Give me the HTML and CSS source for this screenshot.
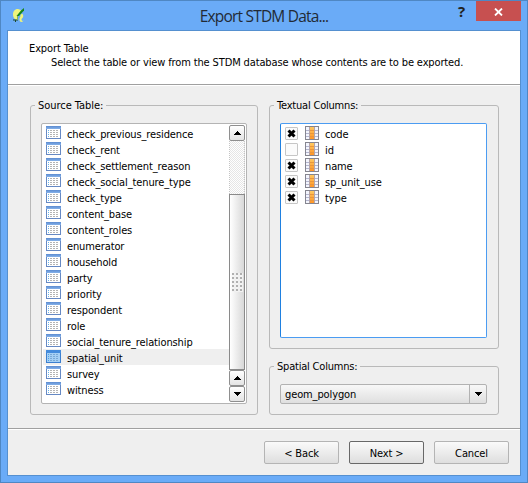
FILE: index.html
```
<!DOCTYPE html>
<html lang="en">
<head>
<meta charset="utf-8">
<title>Export STDM Data...</title>
<link rel="stylesheet" href="styles.css">
</head>
<body>
<svg class="defs" width="0" height="0">
  <defs>
    <linearGradient id="hd" x1="0" y1="0" x2="0" y2="1"><stop offset="0" stop-color="#5b8bd0"/><stop offset="1" stop-color="#86b2ea"/></linearGradient>
    <linearGradient id="or" x1="0" y1="0" x2="0" y2="1"><stop offset="0" stop-color="#ffc860"/><stop offset="1" stop-color="#ff9526"/></linearGradient>
    <symbol id="table" viewBox="0 0 15 13">
      <rect x=".5" y=".5" width="14" height="12" fill="#fff" stroke="#6689c4"/>
      <rect x="0" y="0" width="15" height="3" fill="url(#hd)"/>
      <path d="M2 4.5h2M2 6.5h2M2 8.5h2M2 10.5h2" stroke="#67b2e8" stroke-dasharray="1 1"/>
      <path d="M4 4.5h9M4 6.5h9M4 8.5h9M4 10.5h9" stroke="#b4b4b4" stroke-dasharray="2 1"/>
    </symbol>
    <symbol id="tablesel" viewBox="0 0 15 13">
      <rect x=".5" y=".5" width="14" height="12" fill="#a5d0f5" stroke="#3b7fd0"/>
      <rect x="0" y="0" width="15" height="3" fill="#438bdc"/>
      <path d="M2 4.5h2M2 6.5h2M2 8.5h2M2 10.5h2" stroke="#4aa1e8" stroke-dasharray="1 1"/>
      <path d="M4 4.5h9M4 6.5h9M4 8.5h9M4 10.5h9" stroke="#78a9d6" stroke-dasharray="2 1"/>
    </symbol>
    <symbol id="column" viewBox="0 0 14 14">
      <rect x=".5" y=".5" width="13" height="13" fill="#f3f5fd" stroke="#85858f"/>
      <path d="M1 4.5h12M1 7.5h12M1 10.5h12" stroke="#b3b5cf"/>
      <rect x="5" y="1" width="4" height="12" fill="url(#or)"/>
      <path d="M4.500 1v12M9.500 1v12" stroke="#b5a5a8"/>
      <path d="M5 4.500h4M5 7.500h4M5 10.500h4" stroke="#e9963c"/>
    </symbol>
    <symbol id="cross" viewBox="0 0 9 9"><path d="M1.500 1.500L7.500 7.500M7.500 1.500L1.500 7.500" stroke="#000" stroke-width="3"/></symbol>
    <symbol id="up" viewBox="0 0 7 4"><path d="M3 0h1v1h1v1h1v1h1v1H0V3h1V2h1V1h1z"/></symbol>
    <symbol id="down" viewBox="0 0 7 4"><path d="M0 0h7v1H6v1H5v1H4v1H3V3H2V2H1V1H0z"/></symbol>
  </defs>
</svg>
<div class="window">
  <header class="titlebar">
    <svg class="app" width="13" height="15" viewBox="0 0 13 15">
      <path d="M6 1C2.500 1 1 3.500 1 6.500c0 3 1.500 5 4 5.500V9l4-3V2z" fill="#eff57c"/>
      <path d="M10 5.500c2 1.500 1.500 4-.5 5.500 0 2 1 2.500 2 1.500-.5 2-4 2-4-.5C7 9.500 9 9 8.500 7z" fill="#eff57c"/>
      <path d="M4.500 8L9 2.500 12 0v2.500L7 8z" fill="#16851b"/>
      <path d="M1 11.500h5v1H4V14H3v-1.500H1z" fill="#1d4a2c"/>
      <path d="M5.500 8v4" stroke="#8fb54a"/>
    </svg>
    <h1>Export STDM Data...</h1>
    <span class="help">?</span>
    <span class="close"><svg width="9" height="8" viewBox="0 0 9 8"><path d="M1 .5l7 7M8 .5l-7 7" stroke="#fff" stroke-width="1.800"/></svg></span>
  </header>
  <main class="client">
    <section class="intro">
      <h2>Export Table</h2>
      <p>Select the table or view from the STDM database whose contents are to be exported.</p>
    </section>
    <section class="page">
      <fieldset class="source">
        <legend>Source Table:</legend>
        <div class="list">
          <ul>
            <li><svg><use href="#table"/></svg><span>check_previous_residence</span></li>
            <li><svg><use href="#table"/></svg><span>check_rent</span></li>
            <li><svg><use href="#table"/></svg><span>check_settlement_reason</span></li>
            <li><svg><use href="#table"/></svg><span>check_social_tenure_type</span></li>
            <li><svg><use href="#table"/></svg><span>check_type</span></li>
            <li><svg><use href="#table"/></svg><span>content_base</span></li>
            <li><svg><use href="#table"/></svg><span>content_roles</span></li>
            <li><svg><use href="#table"/></svg><span>enumerator</span></li>
            <li><svg><use href="#table"/></svg><span>household</span></li>
            <li><svg><use href="#table"/></svg><span>party</span></li>
            <li><svg><use href="#table"/></svg><span>priority</span></li>
            <li><svg><use href="#table"/></svg><span>respondent</span></li>
            <li><svg><use href="#table"/></svg><span>role</span></li>
            <li><svg><use href="#table"/></svg><span>social_tenure_relationship</span></li>
            <li class="selected"><svg><use href="#tablesel"/></svg><span>spatial_unit</span></li>
            <li><svg><use href="#table"/></svg><span>survey</span></li>
            <li><svg><use href="#table"/></svg><span>witness</span></li>
          </ul>
          <div class="scrollbar">
            <div class="arrow"><svg><use href="#up"/></svg></div>
            <div class="track"></div>
            <div class="thumb"><i></i></div>
            <div class="arrow"><svg><use href="#up"/></svg></div>
            <div class="arrow"><svg><use href="#down"/></svg></div>
          </div>
        </div>
      </fieldset>
      <div class="right">
        <fieldset class="textual">
          <legend>Textual Columns:</legend>
          <ul class="columns">
            <li><b><svg><use href="#cross"/></svg></b><svg class="col"><use href="#column"/></svg><span>code</span></li>
            <li><b></b><svg class="col"><use href="#column"/></svg><span>id</span></li>
            <li><b><svg><use href="#cross"/></svg></b><svg class="col"><use href="#column"/></svg><span>name</span></li>
            <li><b><svg><use href="#cross"/></svg></b><svg class="col"><use href="#column"/></svg><span>sp_unit_use</span></li>
            <li><b><svg><use href="#cross"/></svg></b><svg class="col"><use href="#column"/></svg><span>type</span></li>
          </ul>
        </fieldset>
        <fieldset class="spatial">
          <legend>Spatial Columns:</legend>
          <div class="combo"><span>geom_polygon</span><div class="drop"><svg><use href="#down"/></svg></div></div>
        </fieldset>
      </div>
    </section>
    <footer>
      <div class="button">&lt; Back</div>
      <div class="button default">Next &gt;</div>
      <div class="button">Cancel</div>
    </footer>
  </main>
</div>
</body>
</html>
```
FILE: styles.css
```
* { box-sizing: border-box; margin: 0; padding: 0; }
body { width: 528px; height: 483px; overflow: hidden; font: 11px/13px "DejaVu Sans Condensed", "DejaVu Sans", sans-serif; font-stretch: condensed; letter-spacing: -0.12px; color: #000; }
.defs { position: absolute; }
svg { display: block; flex: none; }
ul { list-style: none; }
.window { width: 528px; height: 483px; padding: 0 6px 6px; background: #6aabf7; border: 1px solid #4f87c3; }
.titlebar { height: 29px; display: grid; grid-template-columns: 30px 1fr 30px 45px; }
h1 { grid-column: 1 / -1; grid-row: 1; text-align: center; font: 15.5px/30px "Open Sans", sans-serif; color: #222a35; letter-spacing: -0.8px; }
.app { grid-column: 1; grid-row: 1; margin: 7px 0 0 5px; }
.help { grid-column: 3; grid-row: 1; font: bold 15px/21px "Open Sans", sans-serif; color: #222; padding-left: 12px; }
.close { grid-column: 4; grid-row: 1; height: 20px; background: #c75050; display: flex; align-items: center; justify-content: center; padding-top: 2px; }
.client { height: 446px; border: 1px solid #5590d0; background: #efefef; display: flex; flex-direction: column; }
.intro { height: 54px; background: #fff; border-bottom: 1px solid #a0a0a0; padding: 11px 0 0 21px; }
h2 { font-size: 11px; font-weight: normal; line-height: 14px; }
.intro p { line-height: 14px; padding-left: 22px; white-space: nowrap; letter-spacing: -0.13px; }
.page { height: 344px; border-top: 1px solid #fff; border-bottom: 1px solid #a0a0a0; padding: 13px 21px 0 22px; display: flex; gap: 11px; }
fieldset { border: 1px solid #b9b9b9; border-radius: 3px; min-width: 0; }
legend { padding: 0 3px; margin-left: -6px; height: 13px; white-space: nowrap; letter-spacing: -0.2px; }
.source legend { letter-spacing: -0.05px; }
.source { width: 228px; height: 316px; padding: 11px 10px 0; }
.list { width: 206px; height: 281px; border: 1px solid #b4b4b4; border-radius: 2px; background: #fff; display: flex; padding: 1px 1px 1px 0; }
.list ul { flex: 1; padding-left: 1px; }
.list li { height: 16px; line-height: 18px; display: flex; align-items: flex-start; padding: 1px 0 0 3px; gap: 6px; white-space: nowrap; }
.list li svg { width: 15px; height: 13px; }
.list li.selected { background: #efefef; }
.scrollbar { width: 16px; display: flex; flex-direction: column; }
.arrow { height: 16px; border: 1px solid #8f8f8f; border-radius: 2px; background: linear-gradient(#fff, #e4e4e4); display: flex; align-items: center; justify-content: center; }
.arrow svg, .drop svg { width: 7px; height: 4px; }
.track { height: 53px; background: repeating-conic-gradient(#e6e6e6 0 25%, #fff 0 50%) 0 0 / 2px 2px; border: dotted #c4c4c4; border-width: 0 1px; }
.thumb { height: 176px; border: 1px solid #8a8a8a; background: linear-gradient(90deg, #fff, #d8d8d8); display: flex; align-items: center; justify-content: center; }
.thumb i { width: 11px; height: 19px; background: repeating-linear-gradient(90deg, transparent 0 2px, #f0f0f0 2px 4px), repeating-linear-gradient(#b0b0b0 0 2px, #f4f4f4 2px 4px); }
.right { width: 230px; }
.textual { height: 250px; padding: 11px 10px 0; }
.columns { width: 207px; height: 215px; border: 1px solid #4b9cf2; border-left-color: #1f80e0; border-radius: 2px; background: #fff; padding: 1px 0 0 4px; }
.columns li { height: 16px; line-height: 17px; display: flex; align-items: flex-start; padding-top: 1px; }
.columns b { width: 13px; height: 13px; border: 1px solid #c6c6c6; border-radius: 1px; background: #fbfbfb; padding: 1px; margin-top: 1px; }
.columns b svg { width: 9px; height: 9px; }
.columns .col { width: 14px; height: 14px; margin: 0 6px 0 7px; }
.spatial { height: 55px; padding: 11px 10px 0; margin-top: 11px; }
.combo { width: 207px; height: 20px; border: 1px solid #b2b2b2; border-radius: 2px; background: linear-gradient(#f8f8f8, #dfdfdf); display: flex; justify-content: space-between; line-height: 19px; padding-left: 4px; letter-spacing: -0.12px; }
.drop { width: 17px; border-left: 1px solid #b2b2b2; display: flex; align-items: center; justify-content: center; }
footer { border-top: 1px solid #fff; padding: 11px 11px 0 0; display: flex; justify-content: flex-end; gap: 10px; }
.button { width: 75px; height: 23px; border: 1px solid #b4b4b4; border-radius: 2px; background: linear-gradient(#fafafa, #dedede); text-align: center; line-height: 23px; }
.button.default { border-color: #686868; }
```
